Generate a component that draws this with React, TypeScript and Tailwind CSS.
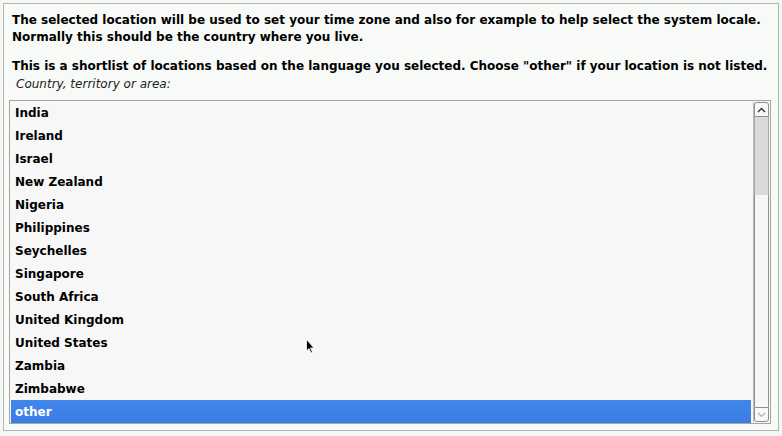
const countries = [
  "India",
  "Ireland",
  "Israel",
  "New Zealand",
  "Nigeria",
  "Philippines",
  "Seychelles",
  "Singapore",
  "South Africa",
  "United Kingdom",
  "United States",
  "Zambia",
  "Zimbabwe",
  "other",
];

const ScrollBar = () => (
  <div className="flex w-[16px] flex-col border-l border-[#b8bab8] bg-[#f3f3f3]">
    <div className="flex h-[15px] items-center justify-center rounded-t-[3px] border border-[#8e908e] bg-[#f8f8f8]">
      <svg width="9" height="6" viewBox="0 0 9 6">
        <path d="M1 5 L4.5 1.5 L8 5" fill="none" stroke="#333" strokeWidth="1.4" />
      </svg>
    </div>
    <div className="h-[78px] border-x border-[#a8aaa8] bg-[#d9dbd9]" />
    <div className="flex-1 border-x border-[#8e908e] bg-[#f6f6f6]" />
    <div className="flex h-[15px] items-center justify-center rounded-b-[3px] border border-[#8e908e] bg-[#f8f8f8]">
      <svg width="9" height="6" viewBox="0 0 9 6">
        <path d="M1 1 L4.5 4.5 L8 1" fill="none" stroke="#b0b0b0" strokeWidth="1.2" />
      </svg>
    </div>
  </div>
);

export default function App() {
  return (
    <div
      className="relative h-[436px] w-[782px] bg-[#f4f7f4] p-[3px]"
      style={{ fontFamily: '"DejaVu Sans", sans-serif' }}
    >
      <div className="flex h-[428px] flex-col border border-[#b4b6b4] bg-[#f7faf7] px-[5px] pt-[8px]">
        <div className="pl-[3px] text-[12px] font-bold leading-[17px] text-black">
          <p>The selected location will be used to set your time zone and also for example to help select the system locale.</p>
          <p>Normally this should be the country where you live.</p>
          <p className="mt-[12px]">This is a shortlist of locations based on the language you selected. Choose "other" if your location is not listed.</p>
        </div>
        <p className="mt-[1px] pl-[7px] text-[12px] italic leading-[17px] text-[#222]">Country, territory or area:</p>
        <div className="mt-[7px] flex h-[324px] w-[762px] border border-[#a4a6a4] bg-[#f7f7f7]">
          <ul className="flex-1 pl-[1px] pr-[2px]">
            {countries.map((c) => (
              <li
                key={c}
                className={
                  c === "other"
                    ? "flex h-[23px] items-center bg-gradient-to-b from-[#4286ec] to-[#3a7ce2] pl-[4px] text-[12px] font-bold text-white"
                    : "flex h-[23px] items-center pl-[4px] text-[12px] font-bold text-black"
                }
              >
                {c}
              </li>
            ))}
          </ul>
          <div className="flex py-[1px] pr-[1px]">
            <ScrollBar />
          </div>
        </div>
      </div>
      <svg className="absolute left-[306px] top-[339px]" width="10" height="16" viewBox="0 0 10 16">
        <path d="M0.5 0.5 L0.5 12 L3 9.5 L5 14 L6.5 13.3 L4.6 9 L8 9 Z" fill="#000" stroke="#fff" strokeWidth="0.8" />
      </svg>
    </div>
  );
}
